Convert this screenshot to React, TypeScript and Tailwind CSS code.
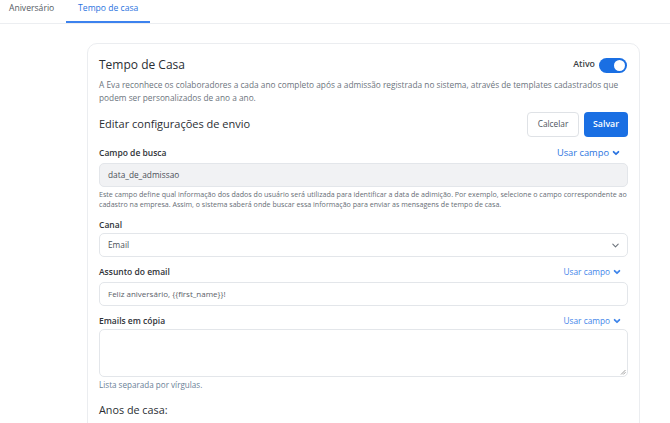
import React from "react";

function Chevron({ className = "", sw = 2 }: { className?: string; sw?: number }) {
  return (
    <svg viewBox="0 0 10 10" className={className} fill="none" stroke="currentColor" strokeWidth={sw} strokeLinecap="round" strokeLinejoin="round">
      <path d="M2 3.5 L5 6.5 L8 3.5" />
    </svg>
  );
}

function UsarCampo({ size = "text-[9.3px]", color = "text-[#2b74e0]" }: { size?: string; color?: string }) {
  return (
    <div className={`flex items-center gap-[3px] ${size} ${color} leading-none`}>
      <span>Usar campo</span>
      <Chevron className="w-[8px] h-[8px]" sw={2.2} />
    </div>
  );
}

export default function App() {
  return (
    <div
      className="w-[670px] h-[423px] overflow-hidden bg-white text-[#212529]"
      style={{ fontFamily: '"Open Sans", "Noto Sans", sans-serif' }}
    >
      <div className="flex h-[24px] border-b border-[#eceef1] text-[8.6px] leading-[14px]">
        <div className="px-[9px] pt-[1px] text-[#555b63]">Aniversário</div>
        <div className="ml-[3px] w-[84px] flex justify-center pt-[1px] text-[#2b74e0] border-b-2 border-[#3c82ee]">
          Tempo de casa
        </div>
      </div>

      <div className="ml-[87px] w-[553px] mt-[19px] border border-[#ebedf0] rounded-[10px] px-[11px] pt-[13px] h-[400px]">
        <div className="flex items-center justify-between h-[16px]">
          <div className="text-[12px] text-[#2a2e33] leading-none">Tempo de Casa</div>
          <div className="flex items-center gap-[4px] mr-[1px]">
            <span className="text-[8.8px] font-semibold text-[#3a3f45]">Ativo</span>
            <div className="w-[28px] h-[15px] rounded-full bg-[#1a6fe3] flex items-center justify-end pr-[2px]">
              <div className="w-[11px] h-[11px] rounded-full bg-white" />
            </div>
          </div>
        </div>

        <p className="mt-[5px] text-[8.3px] leading-[13px] text-[#6c747d]">
          A Eva reconhece os colaboradores a cada ano completo após a admissão registrada no sistema, através de templates cadastrados que podem ser personalizados de ano a ano.
        </p>

        <div className="mt-[8px] flex items-center justify-between h-[25px]">
          <div className="text-[11px] text-[#2a2e33]">Editar configurações de envio</div>
          <div className="flex gap-[5px]">
            <button className="h-[25px] w-[52px] rounded-[4px] border border-[#dfe2e6] bg-white text-[8.3px] text-[#4d545c]">
              Calcelar
            </button>
            <button className="h-[25px] w-[44px] rounded-[4px] bg-[#1a6fe3] text-[8.8px] font-semibold text-white">
              Salvar
            </button>
          </div>
        </div>

        <div className="mt-[9px] flex items-center justify-between h-[14px]">
          <span className="text-[8.5px] font-semibold text-[#2f3338]">Campo de busca</span>
          <div className="mr-[8px]">
            <UsarCampo />
          </div>
        </div>
        <div className="mt-[3px] h-[24px] rounded-[5px] border border-[#e3e6ea] bg-[#f1f2f4] flex items-center px-[8px] text-[8.3px] text-[#4a5058]">
          data_de_admissao
        </div>
        <p className="mt-[2px] text-[7.1px] leading-[10px] text-[#676e76]">
          Este campo define qual informação dos dados do usuário será utilizada para identificar a data de adimição. Por exemplo, selecione o campo correspondente ao cadastro na empresa. Assim, o sistema saberá onde buscar essa informação para enviar as mensagens de tempo de casa.
        </p>

        <div className="mt-[9px] h-[14px] flex items-center text-[8.5px] font-semibold text-[#2f3338]">Canal</div>
        <div className="mt-[1px] h-[24px] rounded-[5px] border border-[#e3e6ea] bg-white flex items-center justify-between pl-[8px] pr-[7px] text-[8.3px] text-[#4a5058]">
          <span>Email</span>
          <Chevron className="w-[9px] h-[9px] text-[#6d747c]" sw={1.2} />
        </div>

        <div className="mt-[8px] flex items-center justify-between h-[14px]">
          <span className="text-[8.5px] font-semibold text-[#2f3338]">Assunto do email</span>
          <div className="mr-[7px]">
            <UsarCampo size="text-[8.3px]" color="text-[#3f85ea]" />
          </div>
        </div>
        <div className="mt-[3px] h-[24px] rounded-[5px] border border-[#e3e6ea] bg-white flex items-center px-[8px] text-[8px] text-[#5a6068]">
          Feliz aniversário, {"{{first_name}}"}!
        </div>

        <div className="mt-[8px] flex items-center justify-between h-[14px]">
          <span className="text-[8.5px] font-semibold text-[#2f3338]">Emails em cópia</span>
          <div className="mr-[7px]">
            <UsarCampo size="text-[8.3px]" color="text-[#3f85ea]" />
          </div>
        </div>
        <div className="mt-[1px] h-[48px] rounded-[5px] border border-[#e3e6ea] bg-white relative">
          <svg viewBox="0 0 6 6" className="absolute right-[1px] bottom-[1px] w-[6px] h-[6px]" stroke="#888" strokeWidth="0.8">
            <path d="M1 5.5 L5.5 1 M3.2 5.5 L5.5 3.2" />
          </svg>
        </div>
        <div className="mt-[3px] text-[8.1px] leading-[10px] text-[#6b7f97]">Lista separada por vírgulas.</div>

        <div className="mt-[12px] text-[10.8px] leading-[16px] text-[#2a2e33]">Anos de casa:</div>
      </div>
    </div>
  );
}
